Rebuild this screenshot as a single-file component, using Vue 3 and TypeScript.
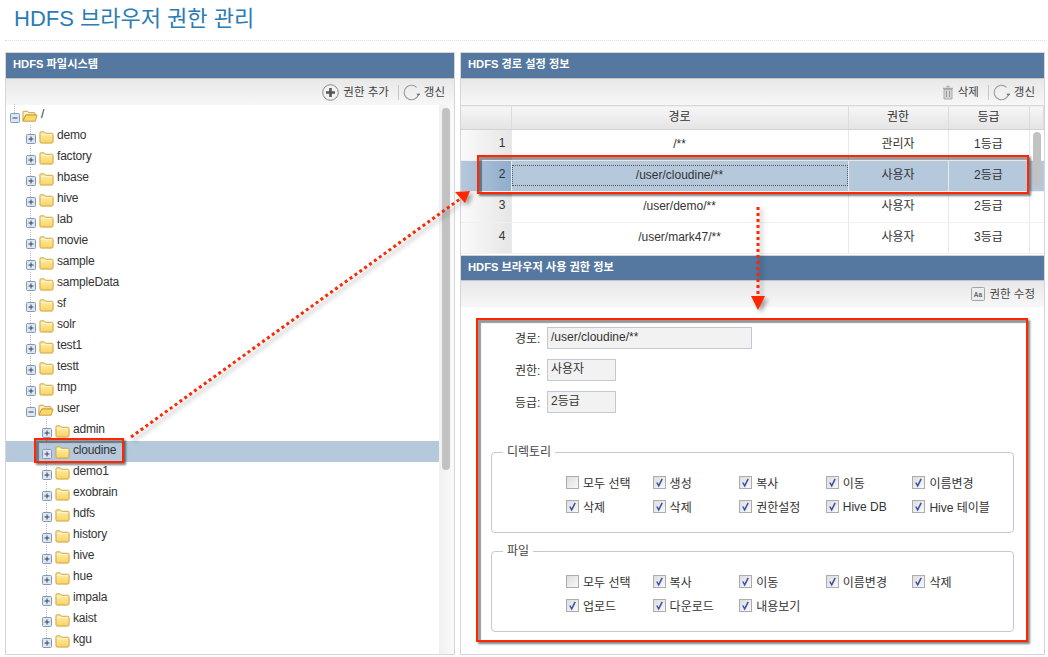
<template>
  <div class="page">
    <h1 class="title">HDFS 브라우저 권한 관리</h1>

    <div class="panels">
      <section class="panel left">
        <h2 class="head">HDFS 파일시스템</h2>
        <div class="tools">
          <span class="tool">
            <svg class="ico" width="17" height="17" viewBox="0 0 17 17">
              <circle cx="8.5" cy="8.5" r="7.8" fill="#f2f2f2" stroke="#8a8a8a" />
              <path d="M8.5 4v9M4 8.500h9" stroke="#555" stroke-width="2.6" />
            </svg>
            권한 추가
          </span>
          <i class="sep"></i>
          <span class="tool">
            <svg class="ico" width="17" height="17" viewBox="0 0 16 16">
              <path d="M12.8 3.200A6.800 6.800 0 1 0 14.700 9" fill="none" stroke="#9a9a9a" />
              <path d="M12.400 9.200h4l-2 2.200z" fill="#777" />
            </svg>
            갱신
          </span>
        </div>
        <div class="tree-wrap">
          <ul class="tree">
            <li v-for="node in nodes" :key="node.id" class="node" :class="{ on: node.name === 'cloudine' }">
              <span class="exp" :class="'lv' + node.level">
                <svg width="10" height="10" viewBox="0 0 10 10">
                  <rect x="0.5" y="0.5" width="9" height="9" rx="1" fill="#dfe6f0" stroke="#8299bb" />
                  <path :d="node.open ? 'M2.500 5h5' : 'M2.500 5h5M5 2.500v5'" stroke="#33445e" stroke-width="1" />
                </svg>
              </span>
              <svg v-if="node.open" class="folder open" width="16" height="14" viewBox="0 0 17 14">
                <path d="M1 12V3q0-1 1-1h4l1 1.500h6q1 0 1 1V6H4z" fill="#fdf3c0" stroke="#c49a3a" />
                <path d="M4 6h12l-2 6.500H1z" fill="#fbd968" stroke="#c49a3a" />
              </svg>
              <svg v-else class="folder" width="15" height="14" viewBox="0 0 16 14">
                <defs>
                  <linearGradient id="fold" x1="0" y1="0" x2="0" y2="1">
                    <stop offset="0" stop-color="#fff0ae" />
                    <stop offset="1" stop-color="#fbd25f" />
                  </linearGradient>
                </defs>
                <path d="M1 12V2.500q0-1 1-1h3.500l1.500 1.500h6.500q1.500 0 1.500 1.500V12q0 1.500-1.500 1.500h-11Q1 13.500 1 12z" fill="url(#fold)" stroke="#c9a043" />
                <path d="M2 4.500h12" stroke="#fff6cf" />
              </svg>
              <span class="name">{{ node.name }}</span>
            </li>
          </ul>
          <div class="rail"><b class="thumb tree-thumb"></b></div>
        </div>
      </section>

      <section class="panel right">
        <h2 class="head">HDFS 경로 설정 정보</h2>
        <div class="tools">
          <span class="tool">
            <svg class="ico" width="12" height="15" viewBox="0 0 12 15">
              <path d="M4.500 1.500h3M1 3.500h10" stroke="#a8a8a8" stroke-width="1.5" />
              <path d="M2 4.500h8V14H2z" fill="#d6d6d6" stroke="#aaa" />
              <path d="M4.500 6v6M7.500 6v6" stroke="#999" />
            </svg>
            삭제
          </span>
          <i class="sep"></i>
          <span class="tool">
            <svg class="ico" width="17" height="17" viewBox="0 0 16 16">
              <path d="M12.800 3.200A6.800 6.800 0 1 0 14.700 9" fill="none" stroke="#9a9a9a" />
              <path d="M12.400 9.200h4l-2 2.200z" fill="#777" />
            </svg>
            갱신
          </span>
        </div>
        <div class="grid-wrap">
          <table class="grid">
            <colgroup>
              <col class="c-no" />
              <col class="c-path" />
              <col class="c-role" />
              <col class="c-grade" />
              <col />
            </colgroup>
            <thead>
              <tr>
                <th></th>
                <th>경로</th>
                <th>권한</th>
                <th>등급</th>
                <th></th>
              </tr>
            </thead>
            <tbody>
              <tr v-for="row in rows" :key="row.no" :class="{ on: row.no === 2 }">
                <td class="no">{{ row.no }}</td>
                <td><div class="cell" :class="{ focus: row.no === 2 }">{{ row.path }}</div></td>
                <td>{{ row.role }}</td>
                <td>{{ row.grade }}</td>
                <td class="blank"></td>
              </tr>
            </tbody>
          </table>
          <b class="thumb grid-thumb"></b>
        </div>

        <h2 class="head second">HDFS 브라우저 사용 권한 정보</h2>
        <div class="tools">
          <span class="tool">
            <svg class="ico" width="14" height="14" viewBox="0 0 14 14">
              <rect x="0.5" y="0.5" width="13" height="13" rx="1" fill="#ececec" stroke="#a5a5a5" />
              <text x="7" y="9.5" text-anchor="middle" font-size="6.5" font-weight="700" font-family="Liberation Sans" fill="#666">Aa</text>
            </svg>
            권한 수정
          </span>
        </div>

        <div class="form">
          <div v-for="f in fields" :key="f.label" class="field">
            <label>{{ f.label }}:</label>
            <div class="input" :class="{ wide: f.wide }">{{ f.value }}</div>
          </div>

          <fieldset v-for="group in groups" :key="group.title" class="group">
            <legend>{{ group.title }}</legend>
            <div class="checks">
              <span v-for="c in group.items" :key="c.label" class="check">
                <svg width="13" height="13" viewBox="0 0 13 13">
                  <defs>
                    <linearGradient id="box" x1="0" y1="0" x2="1" y2="1">
                      <stop offset="0" stop-color="#dcdcdc" />
                      <stop offset="1" stop-color="#fafafa" />
                    </linearGradient>
                  </defs>
                  <rect x="0.5" y="0.5" width="12" height="12" fill="url(#box)" stroke="#acacac" />
                  <path v-if="c.on" d="M3.800 6.500l1.900 3.300 3.500-7" fill="none" stroke="#3a4fa8" stroke-width="1.5" />
                </svg>
                {{ c.label }}
              </span>
            </div>
          </fieldset>
        </div>
      </section>
    </div>

    <!-- 빨간 표시 -->
    <div class="mark mark-node"></div>
    <div class="mark mark-row"></div>
    <div class="mark mark-form"></div>
    <svg class="arrows" width="1048" height="657" viewBox="0 0 1048 657">
      <path d="M131 437L460 199" class="dots" />
      <path d="M470 191L455 192L465 203z" fill="#ff2600" />
      <path d="M758 207V297" class="dots" />
      <path d="M751 296H765L758 310z" fill="#ff2600" />
    </svg>
  </div>
</template>

<script setup lang="ts">
interface TreeNode {
  id: number
  name: string
  level: number
  open: boolean
}

const top = ['demo', 'factory', 'hbase', 'hive', 'lab', 'movie', 'sample', 'sampleData', 'sf', 'solr', 'test1', 'testt', 'tmp']
const sub = ['admin', 'cloudine', 'demo1', 'exobrain', 'hdfs', 'history', 'hive', 'hue', 'impala', 'kaist', 'kgu']

const nodes: TreeNode[] = [
  { name: '/', level: 0, open: true },
  ...top.map((name) => ({ name, level: 1, open: false })),
  { name: 'user', level: 1, open: true },
  ...sub.map((name) => ({ name, level: 2, open: false }))
].map((n, id) => ({ ...n, id }))

const rows = [
  { no: 1, path: '/**', role: '관리자', grade: '1등급' },
  { no: 2, path: '/user/cloudine/**', role: '사용자', grade: '2등급' },
  { no: 3, path: '/user/demo/**', role: '사용자', grade: '2등급' },
  { no: 4, path: '/user/mark47/**', role: '사용자', grade: '3등급' }
]

const fields = [
  { label: '경로', value: '/user/cloudine/**', wide: true },
  { label: '권한', value: '사용자', wide: false },
  { label: '등급', value: '2등급', wide: false }
]

const on = (label: string) => ({ label, on: true })
const off = (label: string) => ({ label, on: false })

const groups = [
  {
    title: '디렉토리',
    items: [
      off('모두 선택'), on('생성'), on('복사'), on('이동'), on('이름변경'),
      on('삭제'), on('삭제 '), on('권한설정'), on('Hive DB'), on('Hive 테이블')
    ]
  },
  {
    title: '파일',
    items: [
      off('모두 선택'), on('복사'), on('이동'), on('이름변경'), on('삭제'),
      on('업로드'), on('다운로드'), on('내용보기')
    ]
  }
]
</script>

<style>
html,
body {
  margin: 0;
  background: #fff;
}
</style>

<style scoped>
.page {
  position: relative;
  width: 1048px;
  height: 657px;
  overflow: hidden;
  padding: 0 3px 0 5px;
  box-sizing: border-box;
  font-family: "Liberation Sans", "Noto Sans CJK KR", sans-serif;
  font-size: 12px;
  color: #333;
}

.title {
  margin: 0;
  height: 41px;
  padding-left: 9px;
  border-bottom: 1px dotted #ddd;
  box-sizing: border-box;
  font-size: 22px;
  font-weight: 400;
  line-height: 38px;
  color: #2b7cb5;
}

.panels {
  display: flex;
  gap: 5px;
  margin-top: 11px;
  height: 603px;
}

.panel {
  display: flex;
  flex-direction: column;
  border: 1px solid #d6d6d6;
  box-sizing: border-box;
  overflow: hidden;
}

.left {
  width: 450px;
}

.right {
  width: 585px;
}

.head {
  flex: none;
  margin: 0;
  height: 26px;
  padding-left: 7px;
  background: #54789f;
  border-bottom: 1px solid #c4c4c4;
  box-sizing: border-box;
  font-size: 11.2px;
  font-weight: 700;
  line-height: 23px;
  color: #fff;
}

.head.second {
  border-top: 1px solid #d0d0d0;
}

.tools {
  flex: none;
  display: flex;
  justify-content: flex-end;
  align-items: center;
  height: 26px;
  padding-right: 9px;
  background: linear-gradient(#e8e8e8, #f7f7f7);
  font-size: 11.5px;
  color: #444;
}

.tool {
  display: flex;
  align-items: center;
  gap: 4px;
  margin-top: -2px;
}

.ico {
  margin-top: 2px;
}

.sep {
  width: 1px;
  height: 15px;
  margin: 0 4px 0 9px;
  background: #c8c8c8;
}

.tree-wrap {
  flex: 1;
  display: flex;
  min-height: 0;
}

.tree {
  flex: 1;
  margin: 0;
  padding: 0;
  list-style: none;
  background: #fff;
}

.node {
  display: flex;
  align-items: center;
  height: 21px;
}

.node.on {
  background: #b5c8dc;
}

.exp {
  position: relative;
  display: flex;
  margin-top: 4px;
  margin-right: 3px;
}

.exp::before {
  content: "";
  position: absolute;
  left: 4px;
  top: -9px;
  height: 9px;
  border-left: 1px dotted #bbb;
}

.lv0 {
  margin-left: 4px;
}

.lv1 {
  margin-left: 20px;
}

.lv2 {
  margin-left: 36px;
}

.folder {
  flex: none;
  margin-right: 3px;
}

.folder.open {
  margin-left: -1px;
}

.name {
  margin-top: -4px;
  letter-spacing: -0.2px;
  color: #333;
}

.rail {
  position: relative;
  width: 15px;
  background: linear-gradient(90deg, #f0f0f0, #fafafa);
}

.thumb {
  position: absolute;
  width: 8px;
  border-radius: 4px;
  background: #c2c2c2;
}

.tree-thumb {
  left: 3px;
  top: 3px;
  height: 362px;
}

.grid-wrap {
  position: relative;
  flex: none;
  height: 150px;
  overflow: hidden;
}

.grid {
  width: 100%;
  border-collapse: collapse;
  table-layout: fixed;
}

.c-no {
  width: 50px;
}

.c-path {
  width: 337px;
}

.c-role {
  width: 100px;
}

.c-grade {
  width: 81px;
}

.grid th {
  height: 24px;
  padding: 0 0 5px;
  background: linear-gradient(#f6f6f6, #e4e4e4);
  border-right: 1px solid #dcdcdc;
  border-bottom: 1px solid #d2d2d2;
  border-top: 1px solid #d8d8d8;
  box-sizing: border-box;
  font-weight: 400;
  color: #333;
}

.grid td {
  height: 31px;
  padding: 0 0 5px;
  border-right: 1px solid #e9e9e9;
  border-bottom: 1px solid #f0f0f0;
  box-sizing: border-box;
  text-align: center;
  color: #333;
}

.grid td.no {
  padding-right: 5px;
  text-align: right;
  background: linear-gradient(90deg, #fafafa, #e6e6e6);
}

.grid td.blank {
  border-right: 0;
}

.grid tr.on td {
  background: #b5c8dc;
}

.grid tr.on td.no {
  background: linear-gradient(90deg, #b5c8dc, #8fadcd);
}

.cell {
  display: flex;
  align-items: center;
  justify-content: center;
  height: 21px;
  margin-top: 4px;
  padding-bottom: 2px;
  box-sizing: border-box;
}

.cell.focus {
  border: 1px dotted #555;
}

.grid-thumb {
  right: 3px;
  top: 27px;
  height: 54px;
}

.form {
  flex: 1;
  padding: 20px 0 0 30px;
  background: #fff;
}

.field {
  display: flex;
  align-items: center;
  height: 22px;
  margin-bottom: 10px;
  padding-left: 24px;
}

.field label {
  width: 32px;
  margin-top: -2px;
}

.input {
  width: 69px;
  height: 22px;
  padding-left: 3px;
  border: 1px solid #c3c6d8;
  background: #f2f2f2;
  box-sizing: border-box;
  line-height: 18px;
}

.input.wide {
  width: 205px;
}

.group {
  width: 523px;
  height: 88px;
  margin: 0 0 11px;
  padding: 0;
  border: 1px solid #c3c8dc;
  border-radius: 4px;
  box-sizing: border-box;
}

.group:first-of-type {
  margin-top: 32px;
}

.group legend {
  margin-left: 11px;
  padding: 0 4px;
  line-height: 14px;
  color: #444;
}

.checks {
  display: grid;
  grid-template-columns: repeat(5, 86.6px);
  row-gap: 7px;
  padding: 15px 0 0 74px;
}

.check {
  display: flex;
  align-items: center;
  gap: 4px;
  height: 17px;
  white-space: nowrap;
  color: #333;
}

.mark {
  position: absolute;
  box-sizing: border-box;
  border: 2px solid #ff2600;
  box-shadow: 2px 2px 2px rgba(0, 0, 0, 0.5), inset 3px 3px 1px rgba(0, 0, 0, 0.4);
}

.mark-node {
  left: 34px;
  top: 438px;
  width: 90px;
  height: 25px;
}

.mark-row {
  left: 477px;
  top: 155px;
  width: 552px;
  height: 39px;
}

.mark-form {
  left: 476px;
  top: 318px;
  width: 552px;
  height: 324px;
}

.arrows {
  position: absolute;
  left: 0;
  top: 0;
  filter: drop-shadow(3px 3px 2px rgba(0, 0, 0, 0.35));
}

.dots {
  fill: none;
  stroke: #ff2600;
  stroke-width: 3;
  stroke-dasharray: 3 3;
}
</style>
